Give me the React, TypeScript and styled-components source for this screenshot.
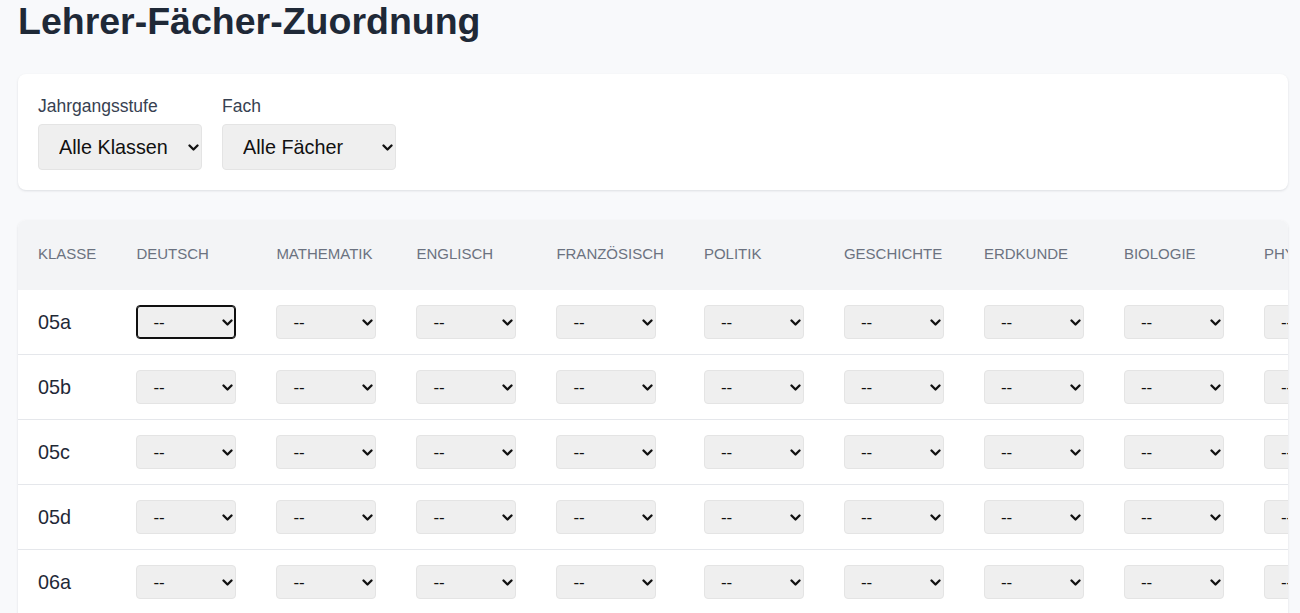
import React from "react";
import styled, { createGlobalStyle } from "styled-components";

const GlobalStyle = createGlobalStyle`
  html, body {
    margin: 0;
    padding: 0;
    background: #f8f9fb;
    font-family: "Liberation Sans", Arial, sans-serif;
    color: #1f2937;
  }
  * { box-sizing: border-box; }
`;

const Page = styled.div`
  padding: 0 12px 0 18px;
`;

const Title = styled.h1`
  margin: 0 0 31px;
  font-size: 37.5px;
  line-height: 43px;
  font-weight: 700;
  color: #1f2937;
`;

const Card = styled.section<{ $pad?: boolean }>`
  background: #ffffff;
  border-radius: 8px;
  box-shadow: 0 1px 3px rgba(15, 23, 42, 0.08), 0 1px 2px rgba(15, 23, 42, 0.04);
  padding: ${(p) => (p.$pad ? "20px" : "0")};
  margin-bottom: 30px;
  overflow: hidden;
`;

const FilterRow = styled.div`
  display: flex;
  gap: 20px;
`;

const Field = styled.div`
  display: flex;
  flex-direction: column;
`;

const Label = styled.label`
  font-size: 17.5px;
  line-height: 24px;
  color: #374151;
  margin-bottom: 6px;
`;

const SelectWrap = styled.span<{ $w: number; $h: number }>`
  position: relative;
  display: block;
  width: ${(p) => p.$w}px;
  height: ${(p) => p.$h}px;
`;

const NativeSelect = styled.select<{ $size: number; $padLeft: number; $focused?: boolean }>`
  appearance: none;
  -webkit-appearance: none;
  display: block;
  width: 100%;
  height: 100%;
  margin: 0;
  padding: 0 22px 0 ${(p) => p.$padLeft}px;
  background: #efefef;
  border: 1px solid ${(p) => (p.$focused ? "#101010" : "#e4e4e4")};
  border-radius: 4px;
  font-family: "Liberation Sans", Arial, sans-serif;
  font-size: ${(p) => p.$size}px;
  color: #111111;
  outline: none;
  box-shadow: ${(p) => (p.$focused ? "inset 0 0 0 1px #101010" : "none")};
`;

const Chevron = styled.svg`
  position: absolute;
  right: 3px;
  top: 50%;
  width: 11px;
  height: 7px;
  margin-top: -3px;
  pointer-events: none;
`;

type SelectProps = {
  w: number;
  h: number;
  size: number;
  padLeft: number;
  focused?: boolean;
  value: string;
  options: string[];
};

const Select = ({ w, h, size, padLeft, focused, value, options }: SelectProps) => (
  <SelectWrap $w={w} $h={h}>
    <NativeSelect $size={size} $padLeft={padLeft} $focused={focused} defaultValue={value}>
      {options.map((o) => (
        <option key={o} value={o}>
          {o}
        </option>
      ))}
    </NativeSelect>
    <Chevron viewBox="0 0 11 7">
      <polyline
        points="1.5,1.5 5.5,5.5 9.5,1.5"
        fill="none"
        stroke="#111"
        strokeWidth="2.3"
        strokeLinecap="round"
        strokeLinejoin="round"
      />
    </Chevron>
  </SelectWrap>
);

const TableScroll = styled.div`
  overflow-x: auto;
`;

const Table = styled.table`
  border-collapse: collapse;
  white-space: nowrap;
`;

const HeadRow = styled.tr`
  background: #f3f4f6;
`;

const Th = styled.th`
  height: 70px;
  padding: 0 20px 3px;
  text-align: left;
  font-size: 15px;
  font-weight: 400;
  text-transform: uppercase;
  color: #6b7280;
  vertical-align: middle;
`;

const Row = styled.tr`
  border-bottom: 1px solid #e5e7eb;
`;

const Td = styled.td`
  padding: 15px 20px;
  vertical-align: middle;
`;

const ClassCell = styled(Td)`
  font-size: 19.8px;
  color: #1f2937;
`;

const subjects = [
  "Deutsch",
  "Mathematik",
  "Englisch",
  "Französisch",
  "Politik",
  "Geschichte",
  "Erdkunde",
  "Biologie",
  "Physik",
  "Chemie",
  "Kunst",
  "Musik",
  "Sport",
];

const classes = ["05a", "05b", "05c", "05d", "06a", "06b", "06c", "06d"];

const teacherOptions = ["--", "Müller", "Schmidt", "Schneider", "Fischer", "Weber"];

export default function App() {
  return (
    <>
      <GlobalStyle />
      <Page>
        <Title>Lehrer-Fächer-Zuordnung</Title>
        <Card $pad>
          <FilterRow>
            <Field>
              <Label>Jahrgangsstufe</Label>
              <Select
                w={164}
                h={46}
                size={19.8}
                padLeft={20}
                value="Alle Klassen"
                options={["Alle Klassen", "05", "06", "07", "08", "09", "10"]}
              />
            </Field>
            <Field>
              <Label>Fach</Label>
              <Select
                w={174}
                h={46}
                size={19.8}
                padLeft={20}
                value="Alle Fächer"
                options={["Alle Fächer", ...subjects]}
              />
            </Field>
          </FilterRow>
        </Card>
        <Card>
          <TableScroll>
            <Table>
              <thead>
                <HeadRow>
                  <Th>Klasse</Th>
                  {subjects.map((s) => (
                    <Th key={s}>{s}</Th>
                  ))}
                </HeadRow>
              </thead>
              <tbody>
                {classes.map((c, ri) => (
                  <Row key={c}>
                    <ClassCell>{c}</ClassCell>
                    {subjects.map((s, si) => (
                      <Td key={s}>
                        <Select
                          w={100}
                          h={34}
                          size={17}
                          padLeft={16}
                          focused={ri === 0 && si === 0}
                          value="--"
                          options={teacherOptions}
                        />
                      </Td>
                    ))}
                  </Row>
                ))}
              </tbody>
            </Table>
          </TableScroll>
        </Card>
      </Page>
    </>
  );
}
